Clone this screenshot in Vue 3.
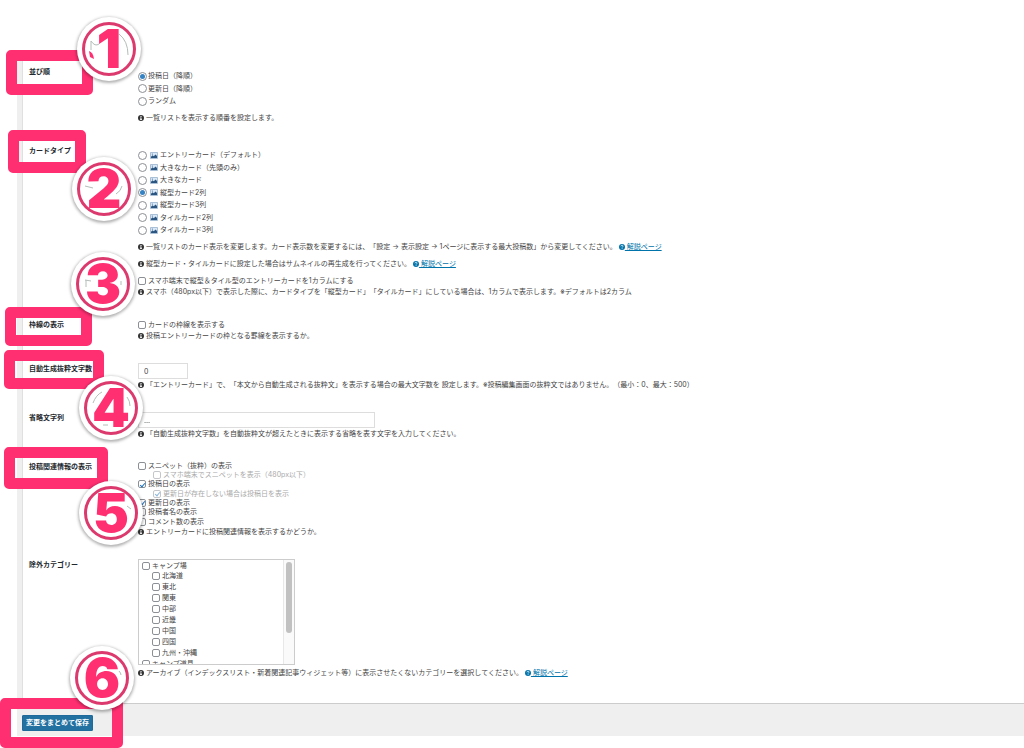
<template>
  <div class="page">
    <svg class="symbols" aria-hidden="true">
      <symbol id="icon-info" viewBox="0 0 16 16">
        <circle cx="8" cy="8" r="8" fill="currentColor" />
        <path d="M6.6 2.6h2.8v2.6H6.6zM5.6 6.6h3.8v4.8h1.2v2H5.4v-2h1.2V8.5h-1z" fill="#fff" />
      </symbol>
      <symbol id="icon-help" viewBox="0 0 16 16">
        <circle cx="8" cy="8" r="8" fill="currentColor" />
        <path d="M5.2 6.2C5.3 4.2 6.5 3.3 8.1 3.3c1.7 0 2.8 1 2.8 2.4 0 1.9-2.6 1.9-2.6 3.9" fill="none" stroke="#fff" stroke-width="1.9" />
        <circle cx="8.2" cy="12" r="1.3" fill="#fff" />
      </symbol>
      <symbol id="icon-image" viewBox="0 0 16 14">
        <rect x="0.8" y="0.8" width="14.4" height="12.4" rx="1" fill="#dbe9f6" stroke="#8fabc6" stroke-width="1.6" />
        <path d="M2 12V9.5l3.2-3 2.4 2.2L11 5l3 3.2V12z" fill="#2a5580" />
        <circle cx="4.8" cy="4.2" r="1.3" fill="#4c7fae" />
      </symbol>
    </svg>

    <form class="frame" @submit.prevent>
      <div class="panel">
        <div class="row" role="group" aria-labelledby="order-title">
          <span id="order-title" class="title">並び順</span>
          <div class="field">
            <div class="radio-list">
              <label v-for="item in orders" :key="item" class="option">
                <input v-model="order" type="radio" name="order" :value="item" />
                <span>{{ item }}</span>
              </label>
            </div>
            <p class="tip spaced"><svg class="icon"><use href="#icon-info" /></svg>一覧リストを表示する順番を設定します。</p>
          </div>
        </div>

        <div class="row" role="group" aria-labelledby="card-title">
          <span id="card-title" class="title">カードタイプ</span>
          <div class="field">
            <div class="radio-list">
              <label v-for="item in cardTypes" :key="item" class="option">
                <input v-model="cardType" type="radio" name="card" :value="item" />
                <svg class="icon-image"><use href="#icon-image" /></svg>
                <span>{{ item }}</span>
              </label>
            </div>
            <p class="tip spaced">
              <svg class="icon"><use href="#icon-info" /></svg>一覧リストのカード表示を変更します。カード表示数を変更するには、「設定 → 表示設定 → 1ページに表示する最大投稿数」から変更してください。
              <a href="#"><svg class="icon-help"><use href="#icon-help" /></svg> 解説ページ</a>
            </p>
            <p class="tip spaced">
              <svg class="icon"><use href="#icon-info" /></svg>縦型カード・タイルカードに設定した場合はサムネイルの再生成を行ってください。
              <a href="#"><svg class="icon-help"><use href="#icon-help" /></svg> 解説ページ</a>
            </p>
            <label class="option single spaced">
              <input v-model="spColumn" type="checkbox" />
              <span>スマホ端末で縦型＆タイル型のエントリーカードを1カラムにする</span>
            </label>
            <p class="tip"><svg class="icon"><use href="#icon-info" /></svg>スマホ（480px以下）で表示した際に、カードタイプを「縦型カード」「タイルカード」にしている場合は、1カラムで表示します。※デフォルトは2カラム</p>
          </div>
        </div>

        <div class="row" role="group" aria-labelledby="border-title">
          <span id="border-title" class="title">枠線の表示</span>
          <div class="field">
            <label class="option single">
              <input v-model="cardBorder" type="checkbox" />
              <span>カードの枠線を表示する</span>
            </label>
            <p class="tip"><svg class="icon"><use href="#icon-info" /></svg>投稿エントリーカードの枠となる罫線を表示するか。</p>
          </div>
        </div>

        <div class="row">
          <label class="title" for="excerpt-length">自動生成抜粋文字数</label>
          <div class="field">
            <input id="excerpt-length" v-model="excerptLength" class="text short" type="text" />
            <p class="tip"><svg class="icon"><use href="#icon-info" /></svg>「エントリーカード」で、「本文から自動生成される抜粋文」を表示する場合の最大文字数を 設定します。※投稿編集画面の抜粋文ではありません。（最小：0、最大：500）</p>
          </div>
        </div>

        <div class="row">
          <label class="title" for="excerpt-more">省略文字列</label>
          <div class="field">
            <input id="excerpt-more" v-model="excerptMore" class="text long" type="text" />
            <p class="tip"><svg class="icon"><use href="#icon-info" /></svg>「自動生成抜粋文字数」を自動抜粋文が超えたときに表示する省略を表す文字を入力してください。</p>
          </div>
        </div>

        <div class="row" role="group" aria-labelledby="meta-title">
          <span id="meta-title" class="title">投稿関連情報の表示</span>
          <div class="field">
            <div class="check-list">
              <label v-for="item in metas" :key="item.label" class="option" :class="{ nested: item.nested }">
                <input v-model="item.checked" type="checkbox" :disabled="item.nested" />
                <span>{{ item.label }}</span>
              </label>
            </div>
            <p class="tip"><svg class="icon"><use href="#icon-info" /></svg>エントリーカードに投稿関連情報を表示するかどうか。</p>
          </div>
        </div>

        <div class="row" role="group" aria-labelledby="category-title">
          <span id="category-title" class="title">除外カテゴリー</span>
          <div class="field">
            <div class="category-box">
              <div class="categories">
                <label v-for="item in categories" :key="item.label" class="option" :class="{ child: item.child }">
                  <input v-model="item.checked" type="checkbox" />
                  <span>{{ item.label }}</span>
                </label>
              </div>
              <div class="track"><div class="thumb"></div></div>
            </div>
            <p class="tip">
              <svg class="icon"><use href="#icon-info" /></svg>アーカイブ（インデックスリスト・新着関連記事ウィジェット等）に表示させたくないカテゴリーを選択してください。
              <a href="#"><svg class="icon-help"><use href="#icon-help" /></svg> 解説ページ</a>
            </p>
          </div>
        </div>
      </div>

      <div class="footer">
        <button type="submit" class="save">変更をまとめて保存</button>
      </div>
    </form>

    <div
      v-for="(box, i) in boxes"
      :key="'box' + i"
      class="mark-box"
      :style="{ left: box.x + 'px', top: box.y + 'px', width: box.w + 'px', height: box.h + 'px' }"
    ></div>
    <div
      v-for="(pin, i) in pins"
      :key="'pin' + i"
      class="pin"
      :style="{ left: pin.x + 'px', top: pin.y + 'px' }"
    >
      <svg class="pin-lines" viewBox="0 0 54 54" aria-hidden="true">
        <path :d="pin.lines" />
        <path v-if="pin.blot" class="blot" :d="pin.blot" />
      </svg>
      <span class="digit">{{ i + 1 }}</span>
    </div>
  </div>
</template>

<script setup>
import { ref } from 'vue'

const orders = ['投稿日（降順）', '更新日（降順）', 'ランダム']
const order = ref('投稿日（降順）')

const cardTypes = [
  'エントリーカード（デフォルト）',
  '大きなカード（先頭のみ）',
  '大きなカード',
  '縦型カード2列',
  '縦型カード3列',
  'タイルカード2列',
  'タイルカード3列'
]
const cardType = ref('縦型カード2列')

const spColumn = ref(false)
const cardBorder = ref(false)
const excerptLength = ref('0')
const excerptMore = ref('...')

const metas = ref([
  { label: 'スニペット（抜粋）の表示', checked: false },
  { label: 'スマホ端末でスニペットを表示（480px以下）', checked: false, nested: true },
  { label: '投稿日の表示', checked: true },
  { label: '更新日が存在しない場合は投稿日を表示', checked: true, nested: true },
  { label: '更新日の表示', checked: true },
  { label: '投稿者名の表示', checked: false },
  { label: 'コメント数の表示', checked: false }
])

const categories = ref([
  { label: 'キャンプ場', checked: false },
  { label: '北海道', checked: false, child: true },
  { label: '東北', checked: false, child: true },
  { label: '関東', checked: false, child: true },
  { label: '中部', checked: false, child: true },
  { label: '近畿', checked: false, child: true },
  { label: '中国', checked: false, child: true },
  { label: '四国', checked: false, child: true },
  { label: '九州・沖縄', checked: false, child: true },
  { label: 'キャンプ道具', checked: false }
])

const boxes = [
  { x: 6, y: 50, w: 87, h: 45 },
  { x: 8, y: 130, w: 78, h: 43 },
  { x: 5, y: 307, w: 87, h: 39 },
  { x: 4, y: 350, w: 100, h: 39 },
  { x: 4, y: 447, w: 104, h: 42 },
  { x: 0, y: 698, w: 123, h: 50 }
]

// 丸数字の中心座標と、数字の後ろに見える細い線
const pins = [
  { x: 109, y: 49, lines: 'M9 19q4 6 8 3M9 19v9M37 12q9 7 9 21', blot: 'M7 29q4 1 5 8l-4-2z' },
  { x: 104, y: 189, lines: 'M8 24l8 2M39 32q5-3 6-8' },
  { x: 103, y: 284, lines: 'M9 23l6 1M10 23v7M45 24v4' },
  { x: 111, y: 408, lines: 'M9 22q3-8 9-11M43 16q3 4 3 9M19 44h5' },
  { x: 111, y: 513, lines: 'M43 20l4 3' },
  { x: 102, y: 678, lines: 'M44 20q2 2 2 4' }
]
</script>

<style>
body {
  margin: 0;
  background: #fff;
}
</style>

<style scoped>
.page {
  position: relative;
  overflow: hidden;
  padding: 56px 0 12px 17px;
  font-family: Inter, "Noto Sans CJK JP", sans-serif;
  font-size: 7px;
  line-height: 12px;
  color: #444;
  text-spacing-trim: space-all;
}

.symbols {
  position: absolute;
  width: 0;
  height: 0;
}

.frame {
  padding-left: 5px;
  background: #efefef;
}

.panel {
  display: flex;
  flex-direction: column;
  gap: 21px;
  padding: 10px 0 24px 6px;
  background: #fff;
  border-left: 1px solid #e0e0e0;
  border-bottom: 1px solid #ccc;
}

.row {
  display: grid;
  grid-template-columns: 109px 1fr;
}

.title {
  font-weight: 700;
  color: #23282d;
}

.radio-list {
  display: grid;
  grid-auto-rows: 12px 13px;
  padding-top: 4px;
}

.check-list {
  display: grid;
  grid-auto-rows: 9px 9px 10px;
}

.option {
  display: flex;
  align-items: center;
  justify-self: start;
  gap: 2px;
  white-space: nowrap;
}

.radio-list .option {
  gap: 1px;
}

.single {
  height: 11px;
}

.spaced {
  margin-top: 5px;
}

.nested {
  margin-left: 15px;
  color: #aaa;
}

input[type='radio'],
input[type='checkbox'] {
  appearance: none;
  box-sizing: border-box;
  display: grid;
  place-content: center;
  flex-shrink: 0;
  width: 8px;
  height: 8px;
  margin: 0;
  background: #fff;
  border: 1px solid #8c8f94;
  border-radius: 2px;
}

input[type='radio'] {
  width: 9px;
  height: 9px;
  border-radius: 50%;
}

input[type='radio']:checked::before {
  content: '';
  width: 5px;
  height: 5px;
  border-radius: 50%;
  background: #3582c4;
}

input[type='checkbox']:checked::before {
  content: '';
  width: 2px;
  height: 4px;
  border: solid #1e73be;
  border-width: 0 1px 1px 0;
  transform: rotate(40deg);
}

input[type='checkbox']:disabled {
  opacity: 0.5;
}

.icon,
.icon-help {
  width: 6px;
  height: 6px;
  vertical-align: -1px;
}

.icon {
  margin-right: 2px;
  color: #333;
}

.icon-image {
  width: 8px;
  height: 7px;
  margin: 0 1px 0 2px;
}

.tip {
  margin-bottom: 0;
}

.tip:not(.spaced) {
  margin-top: 0;
}

a {
  color: #0073aa;
  text-decoration: underline;
}

.text {
  display: block;
  box-sizing: border-box;
  height: 16px;
  margin: 0;
  padding: 0 5px;
  border: 1px solid #ddd;
  background: #fff;
  color: #444;
  font-family: inherit;
  font-size: 7px;
}

.short {
  width: 50px;
}

.long {
  width: 237px;
}

.category-box {
  display: flex;
  box-sizing: border-box;
  width: 157px;
  height: 106px;
  margin-bottom: 2px;
  border: 1px solid #ccc;
  overflow: hidden;
}

.categories {
  display: grid;
  grid-template-rows: 9px;
  grid-auto-rows: 11px;
  flex: 1;
  padding: 1px 0 0 3px;
}

.child {
  margin-left: 10px;
}

.track {
  width: 6px;
  padding: 2px;
  background: #fafafa;
  border-left: 1px solid #e8e8e8;
}

.thumb {
  height: 71px;
  border-radius: 3px;
  background: #c1c1c1;
}

.footer {
  padding: 11px 0 5px;
}

.save {
  display: block;
  height: 16px;
  padding: 0 3px;
  border: 1px solid #1f6a9a;
  border-radius: 1px;
  background: #2271a1;
  color: #fff;
  font-family: inherit;
  font-size: 7px;
  font-weight: 600;
  line-height: 14px;
}

.mark-box {
  position: absolute;
  box-sizing: border-box;
  border: 11px solid #ff2f72;
  border-radius: 5px;
  pointer-events: none;
}

.pin {
  position: absolute;
  display: grid;
  place-content: center;
  place-items: center;
  box-sizing: border-box;
  width: 54px;
  height: 54px;
  margin: -27px 0 0 -27px;
  border: 3px solid #dc3a6e;
  border-radius: 50%;
  background: #fff;
  box-shadow: 0 0 0 5px #fff, 0 1px 3px 6px rgba(0, 0, 0, 0.3);
}

.pin-lines,
.digit {
  grid-area: 1 / 1;
}

.pin-lines {
  width: 54px;
  height: 54px;
  fill: none;
  stroke: #b4bdb9;
}

.blot {
  fill: #ff2f72;
  stroke: none;
}

.digit {
  position: relative;
  font-family: Inter, "Liberation Sans", sans-serif;
  font-size: 54px;
  font-weight: 900;
  line-height: 54px;
  color: #ff2f72;
}
</style>
